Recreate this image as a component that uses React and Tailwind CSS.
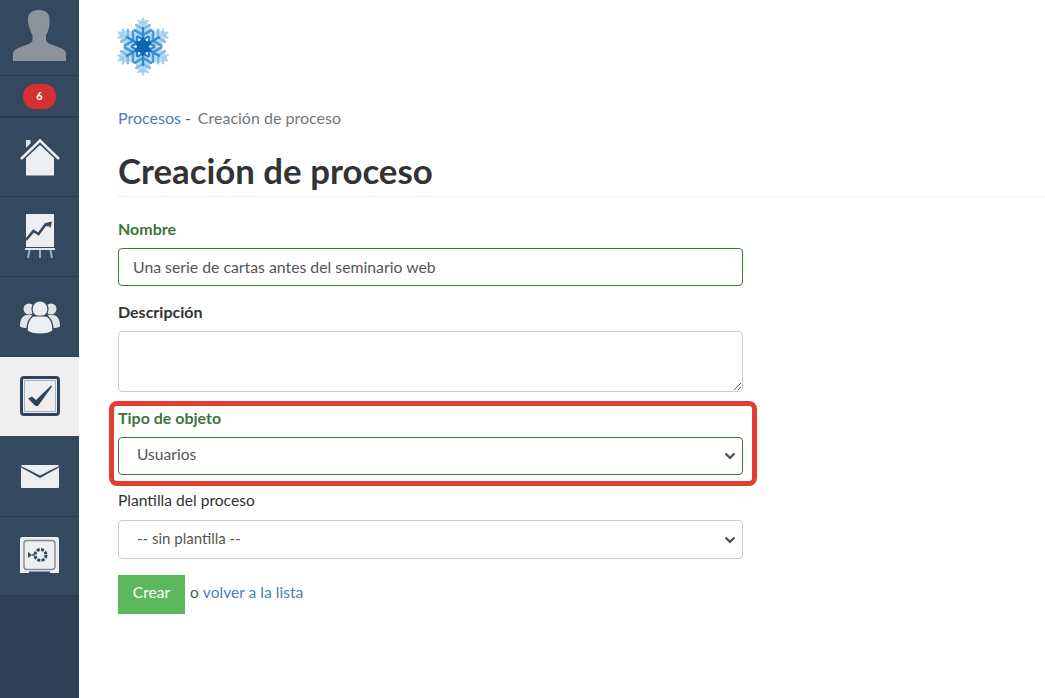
import React from "react";

const Branch = ({ r, l, c, w }) => {
  const y = 29.5 - r;
  const dx = l * 0.866;
  const dy = l * 0.5;
  return (
    <path
      d={`M${26 - dx} ${y - dy} L26 ${y} L${26 + dx} ${y - dy}`}
      fill="none"
      stroke={c}
      strokeWidth={w}
      strokeLinecap="round"
      strokeLinejoin="round"
    />
  );
};

const Arm = ({ a }) => (
  <g transform={`rotate(${a} 26 29.5)`}>
    <path d="M26 0.500 L33 9 L33.500 17 L26 27 L18.500 17 L19 9 Z" fill="#bcdcf3" />
    <path d="M26 29.500 V1" stroke="#a5cff0" strokeWidth="1.600" strokeLinecap="round" />
    <Branch r={23} l={5.500} c="#9ccbee" w={2} />
    <Branch r={17.500} l={8} c="#7fbae8" w={2.400} />
    <Branch r={11.500} l={9.500} c="#479ad9" w={2.600} />
    <Branch r={7} l={6} c="#2b83cc" w={2.200} />
    <path d="M26 29.500 V10" stroke="#2f87cf" strokeWidth="2.400" />
  </g>
);

const Snowflake = () => (
  <svg width="52" height="59" viewBox="0 0 52 59" className="-ml-[1px] block blur-[0.5px]">
    {[0, 60, 120, 180, 240, 300].map((a) => (
      <Arm key={a} a={a} />
    ))}
    <path d="M26 20 L29.500 24 L34.500 24.500 L32 29.500 L34.500 34.500 L29.500 35 L26 39 L22.500 35 L17.500 34.500 L20 29.500 L17.500 24.500 L22.500 24 Z" fill="#0f65b0" />
  </svg>
);

const Item = ({ active, h = "h-[80px]", children }) => (
  <div
    className={`flex ${h} items-center justify-center border-b ${
      active ? "border-[#eeeeee] bg-[#eeeeee]" : "border-[#2c3d51] bg-[#34485e]"
    }`}
  >
    {children}
  </div>
);

const Home = () => (
  <svg width="40" height="38" viewBox="0 0 40 38">
    <path d="M6 2h4.500v3.500L6 10z" fill="#dfe3e6" />
    <path d="M1 21 20 2.500 39 21" fill="none" stroke="#eceff1" strokeWidth="2.600" />
    <path d="M6 20 20 7l14 13v17.500H6z" fill="#eceff1" />
  </svg>
);

const Chart = () => (
  <svg width="30" height="45" viewBox="0 0 30 45">
    <path d="M1 0h28v33H1z" fill="#eceff1" />
    <path d="M1 26 8.500 17l5 3 7-9.500 3 .8" fill="none" stroke="#34485e" strokeWidth="2.600" />
    <path d="M20.500 9 27 7.500 25.500 14z" fill="#34485e" />
    <path d="M0 34h30v2H0z" fill="#dfe3e6" />
    <path d="M4.500 36 3 44M15 36v8M25.500 36 27 44" stroke="#a4adb6" strokeWidth="2" />
  </svg>
);

const Team = () => (
  <svg width="40" height="34" viewBox="0 0 40 34">
    <circle cx="9" cy="9" r="5.500" fill="#dfe3e6" />
    <circle cx="31" cy="9" r="5.500" fill="#dfe3e6" />
    <path d="M0 26c0-7 3-11 7-11h5L7 28c-3 0-7-.5-7-2zM40 26c0-7-3-11-7-11h-5l5 13c3 0 7-.5 7-2z" fill="#dfe3e6" />
    <circle cx="20" cy="9" r="8" fill="#eceff1" stroke="#34485e" strokeWidth="1.200" />
    <path d="M7 30c0-9 4-14 8-14h10c4 0 8 5 8 14 0 2-6 4-13 4s-13-2-13-4z" fill="#eceff1" stroke="#34485e" strokeWidth="1.200" />
  </svg>
);

const Check = () => (
  <svg width="40" height="40" viewBox="0 0 40 40">
    <rect x="1.500" y="1.500" width="37" height="37" rx="2.500" fill="#eeeeee" stroke="#2f455c" strokeWidth="3" />
    <rect x="4.500" y="4.500" width="31" height="31" fill="none" stroke="#a7b0ba" strokeWidth="1" />
    <path d="M8 22.500 L12 20.500 L16 24 L31 9.500 L32 10.500 L18 30 H15.500 Z" fill="#2f455c" />
  </svg>
);

const Mail = () => (
  <svg width="38" height="23" viewBox="0 0 38 23">
    <path d="M0 2.500 19 13 38 2.500V22a1 1 0 0 1-1 1H1a1 1 0 0 1-1-1z" fill="#eceff1" />
    <path d="M1 0h36l1 1L19 10.500 0 1z" fill="#eceff1" />
  </svg>
);

const Safe = () => (
  <svg width="39" height="38" viewBox="0 0 39 38">
    <path d="M2 0h35a2 2 0 0 1 2 2v34h-9v-1.500H9V36H0V2a2 2 0 0 1 2-2z" fill="#eceff1" />
    <rect x="4" y="3.500" width="31" height="29" rx="3" fill="#eceff1" stroke="#7d8a98" strokeWidth="1.400" />
    <circle cx="20.500" cy="18" r="5.500" fill="none" stroke="#34485e" strokeWidth="3" strokeDasharray="3 1.300" />
    <path d="M8 15 12 18 8 21z" fill="#34485e" />
    <path d="M12 18h3" stroke="#34485e" strokeWidth="1.400" />
  </svg>
);

const Avatar = () => (
  <svg width="53" height="51" viewBox="0 0 53 51">
    <path
      d="M26 0c6 0 10.500 3 10.500 9 0 4 .5 7-.8 9.500-.7 2.500-1.700 5-2.700 6.500v5c0 3 5 4.500 9.500 6 6 2 9.500 3.500 10.500 7v8H0v-8c1-3.500 4.500-5 10.500-7 4.500-1.500 9-3 9-6v-5c-1-1.500-2-4-2.700-6.500-1.300-2.500-1.800-5.500-1.800-9.500 0-6 4.500-9 11-9z"
      fill="#8b939c"
    />
  </svg>
);

const Label = ({ children, tone = "text-[#3c763d]" }) => (
  <label className={`mb-[8px] block h-[21px] text-[16px] leading-[19px] font-bold ${tone}`}>{children}</label>
);

const Select = ({ border, h, size, children }) => (
  <div className="relative">
    <select className={`block ${h} ${size} w-full appearance-none rounded-[4px] border ${border} bg-white pr-[30px] pb-[2px] pl-[18px] text-[#555555] outline-none`}>
      {children}
    </select>
    <svg
      width="12"
      height="8"
      viewBox="0 0 12 8"
      className="pointer-events-none absolute top-1/2 right-[7px] -translate-y-1/2"
    >
      <path d="M1.500 1.500 6 5.800l4.500-4.300" fill="none" stroke="#555555" strokeWidth="2.400" />
    </svg>
  </div>
);

export default function App() {
  return (
    <div className="flex min-h-[698px] bg-white font-['Lato','Open_Sans',sans-serif] text-[15.600px] text-[#333333]">
      <aside className="flex w-[79px] shrink-0 flex-col bg-[#2f4055]">
        <div className="flex h-[76px] items-start justify-center border-b border-[#2c3d51] bg-[#34485e] pt-[10px]">
          <Avatar />
        </div>
        <div className="flex h-[42px] items-center justify-center border-b-2 border-[#2c3d51] bg-[#34485e]">
          <span className="flex h-[25px] w-[33px] items-center justify-center rounded-[12px] bg-[#d3302f] text-[11px] font-bold text-white">
            6
          </span>
        </div>
        <Item h="h-[79px]"><Home /></Item>
        <Item><Chart /></Item>
        <Item><Team /></Item>
        <Item active h="h-[79px]"><Check /></Item>
        <Item h="h-[81px]"><Mail /></Item>
        <Item h="h-[79px]"><Safe /></Item>
      </aside>

      <main className="min-w-0 flex-1 pl-[39px]">
        <div className="pt-[17px]">
          <Snowflake />
        </div>
        <nav className="mt-[32px] flex h-[21px] items-center pb-[2px] text-[16px] leading-[19px]">
          <a className="text-[#4a7fb8]">Procesos</a>
          <span className="ml-[4px] text-[#555555]">-</span>
          <span className="ml-[7px] text-[#777777]">Creación de proceso</span>
        </nav>
        <h1 className="mt-[19px] flex h-[49px] items-center border-b border-[#eeeeee] pb-[2px] text-[34.800px] leading-[40px] font-bold text-[#333333]">
          Creación de proceso
        </h1>

        <form className="mt-[22px] w-[625px]">
          <Label>Nombre</Label>
          <input
            readOnly
            value="Una serie de cartas antes del seminario web"
            className="block h-[38px] w-full rounded-[4px] border border-[#3c763d] bg-white px-[14px] pb-[2px] text-[15.800px] text-[#555555] outline-none"
          />

          <div className="mt-[16px]">
            <Label tone="text-[#333333]">Descripción</Label>
            <textarea className="block h-[61px] w-full rounded-[4px] border border-[#cccccc] bg-white px-[14px] py-[6px] text-[15.800px] text-[#555555] outline-none" />
          </div>

          <div className="relative mt-[16px]">
            <Label>Tipo de objeto</Label>
            <Select border="border-[#3c763d]" h="h-[38px]" size="text-[15.600px]">
              <option>Usuarios</option>
            </Select>
            <div className="pointer-events-none absolute top-[-7px] right-[-14px] bottom-[-11px] left-[-9px] rounded-[8px] border-[5px] border-[#e53c32]" />
          </div>

          <div className="mt-[16px]">
            <label className="mb-[8px] block h-[21px] leading-[19px] text-[#333333]">Plantilla del proceso</label>
            <Select border="border-[#cccccc]" h="h-[39px]" size="text-[15px]">
              <option>-- sin plantilla --</option>
            </Select>
          </div>

          <div className="mt-[16px] flex items-center">
            <button type="button" className="h-[39px] w-[67px] bg-[#5cb85c] pb-[4px] text-white">
              Crear
            </button>
            <span className="ml-[5px] pb-[4px] text-[#555555]">o</span>
            <a className="ml-[4px] pb-[4px] text-[#4a7fb8]">volver a la lista</a>
          </div>
        </form>
      </main>
    </div>
  );
}
